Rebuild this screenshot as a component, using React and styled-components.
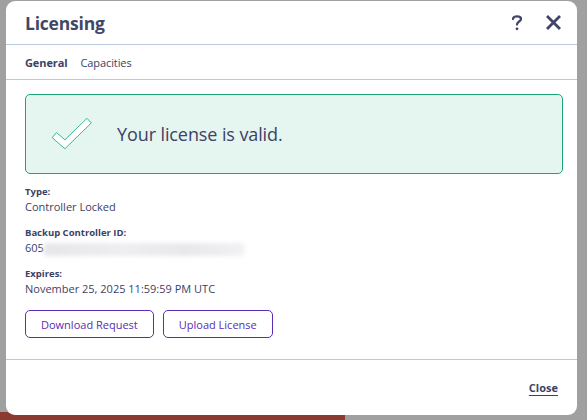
import React from 'react';
import styled, { createGlobalStyle } from 'styled-components';

const GlobalStyle = createGlobalStyle`
  html, body {
    margin: 0;
    padding: 0;
  }
  body {
    font-family: 'Open Sans', 'Noto Sans', sans-serif;
    color: #3c4266;
  }
  * { box-sizing: border-box; }
`;

const Backdrop = styled.div`
  width: 587px;
  height: 420px;
  overflow: hidden;
  padding: 1px 10px 0 6px;
  background:
    linear-gradient(#8b3a32, #8b3a32) 0 100% / 345px 8px no-repeat,
    #a0a0a0;
`;

const Modal = styled.div`
  width: 571px;
  height: 414px;
  background: #fff;
  border-radius: 9px;
  display: flex;
  flex-direction: column;
  overflow: hidden;
`;

const Header = styled.div`
  height: 44px;
  display: flex;
  align-items: center;
  justify-content: space-between;
  padding: 0 16px 0 19px;
  border-bottom: 1px solid #b9cbdb;
  flex-shrink: 0;
`;

const Title = styled.h1`
  margin: 0;
  font-size: 17.5px;
  font-weight: 700;
  color: #414767;
  letter-spacing: -0.2px;
`;

const HeaderActions = styled.div`
  display: flex;
  align-items: center;
  gap: 23px;
`;

const IconButton = styled.button`
  border: none;
  background: none;
  padding: 0;
  display: flex;
  align-items: center;
  justify-content: center;
  color: #3f4468;
  cursor: pointer;
`;

const Tabs = styled.div`
  height: 35px;
  display: flex;
  align-items: center;
  gap: 13px;
  padding: 0 19px;
  border-bottom: 1px solid #b9cbdb;
  flex-shrink: 0;
`;

const Tab = styled.span`
  font-size: 11px;
  font-weight: ${(p) => (p.$active ? 700 : 400)};
  color: #3c4266;
  letter-spacing: -0.1px;
`;

const Body = styled.div`
  flex: 1;
  padding: 14px 14px 0 19px;
  border-bottom: 1px solid #b9cbdb;
`;

const ValidBox = styled.div`
  height: 80px;
  border: 1px solid #1ba574;
  background: #e5f5ef;
  border-radius: 5px;
  display: flex;
  align-items: center;
  gap: 22px;
  padding-left: 23px;
`;

const ValidText = styled.span`
  font-size: 18px;
  color: #3c4266;
  letter-spacing: -0.1px;
`;

const Fields = styled.div`
  display: flex;
  flex-direction: column;
  gap: 11px;
  margin-top: 11px;
`;

const Field = styled.div`
  display: flex;
  flex-direction: column;
  gap: 1px;
`;

const Label = styled.span`
  font-size: 9.5px;
  font-weight: 700;
  color: #3c4266;
`;

const Value = styled.span`
  font-size: 11px;
  line-height: 16px;
  color: #3c4266;
  white-space: nowrap;
`;

const Redacted = styled.span`
  display: inline-block;
  width: 200px;
  height: 13px;
  vertical-align: middle;
  background: linear-gradient(90deg, #e6e6ea, #eeeef1 40%, #e8e8ec 70%, #f1f1f3);
  filter: blur(2px);
`;

const Actions = styled.div`
  display: flex;
  gap: 9px;
  margin-top: 13px;
`;

const OutlineButton = styled.button`
  height: 28px;
  padding: 0 15px;
  border: 1px solid #5a2db4;
  border-radius: 5px;
  background: #fff;
  color: #5a2db4;
  font-family: inherit;
  font-size: 11px;
  cursor: pointer;
`;

const Footer = styled.div`
  height: 55px;
  display: flex;
  align-items: center;
  justify-content: flex-end;
  padding-right: 19px;
  flex-shrink: 0;
`;

const CloseLink = styled.a`
  font-size: 11px;
  font-weight: 700;
  color: #3c4266;
  text-decoration: underline;
  text-underline-offset: 3px;
  cursor: pointer;
`;

const CheckIcon = () => (
  <svg width="46" height="36" viewBox="46 115 50 38">
    <polygon
      points="49.5,138 54,132.5 63.3,140.3 87.3,117 92,122 63.3,150"
      fill="#fff"
      stroke="#2fb17f"
      strokeWidth="1"
      strokeLinejoin="round"
    />
  </svg>
);

const HelpIcon = () => (
  <svg width="12" height="17" viewBox="0 0 12 17">
    <path d="M2 5 C2 1.5 10 1.5 10 5 C10 7.5 6 7.5 6 10.5" fill="none" stroke="currentColor" strokeWidth="2.3" strokeLinecap="round" />
    <circle cx="6" cy="14.8" r="1.4" fill="currentColor" />
  </svg>
);

const CloseIcon = () => (
  <svg width="15" height="15" viewBox="0 0 15 15">
    <path d="M2 2 L13 13 M13 2 L2 13" stroke="currentColor" strokeWidth="2.8" strokeLinecap="square" />
  </svg>
);

const App = () => {
  return (
    <Backdrop>
      <GlobalStyle />
      <Modal>
        <Header>
          <Title>Licensing</Title>
          <HeaderActions>
            <IconButton aria-label="Help"><HelpIcon /></IconButton>
            <IconButton aria-label="Close"><CloseIcon /></IconButton>
          </HeaderActions>
        </Header>
        <Tabs>
          <Tab $active>General</Tab>
          <Tab>Capacities</Tab>
        </Tabs>
        <Body>
          <ValidBox>
            <CheckIcon />
            <ValidText>Your license is valid.</ValidText>
          </ValidBox>
          <Fields>
            <Field>
              <Label>Type:</Label>
              <Value>Controller Locked</Value>
            </Field>
            <Field>
              <Label>Backup Controller ID:</Label>
              <Value>605<Redacted /></Value>
            </Field>
            <Field>
              <Label>Expires:</Label>
              <Value>November 25, 2025 11:59:59 PM UTC</Value>
            </Field>
          </Fields>
          <Actions>
            <OutlineButton>Download Request</OutlineButton>
            <OutlineButton>Upload License</OutlineButton>
          </Actions>
        </Body>
        <Footer>
          <CloseLink>Close</CloseLink>
        </Footer>
      </Modal>
    </Backdrop>
  );
};

export default App;
